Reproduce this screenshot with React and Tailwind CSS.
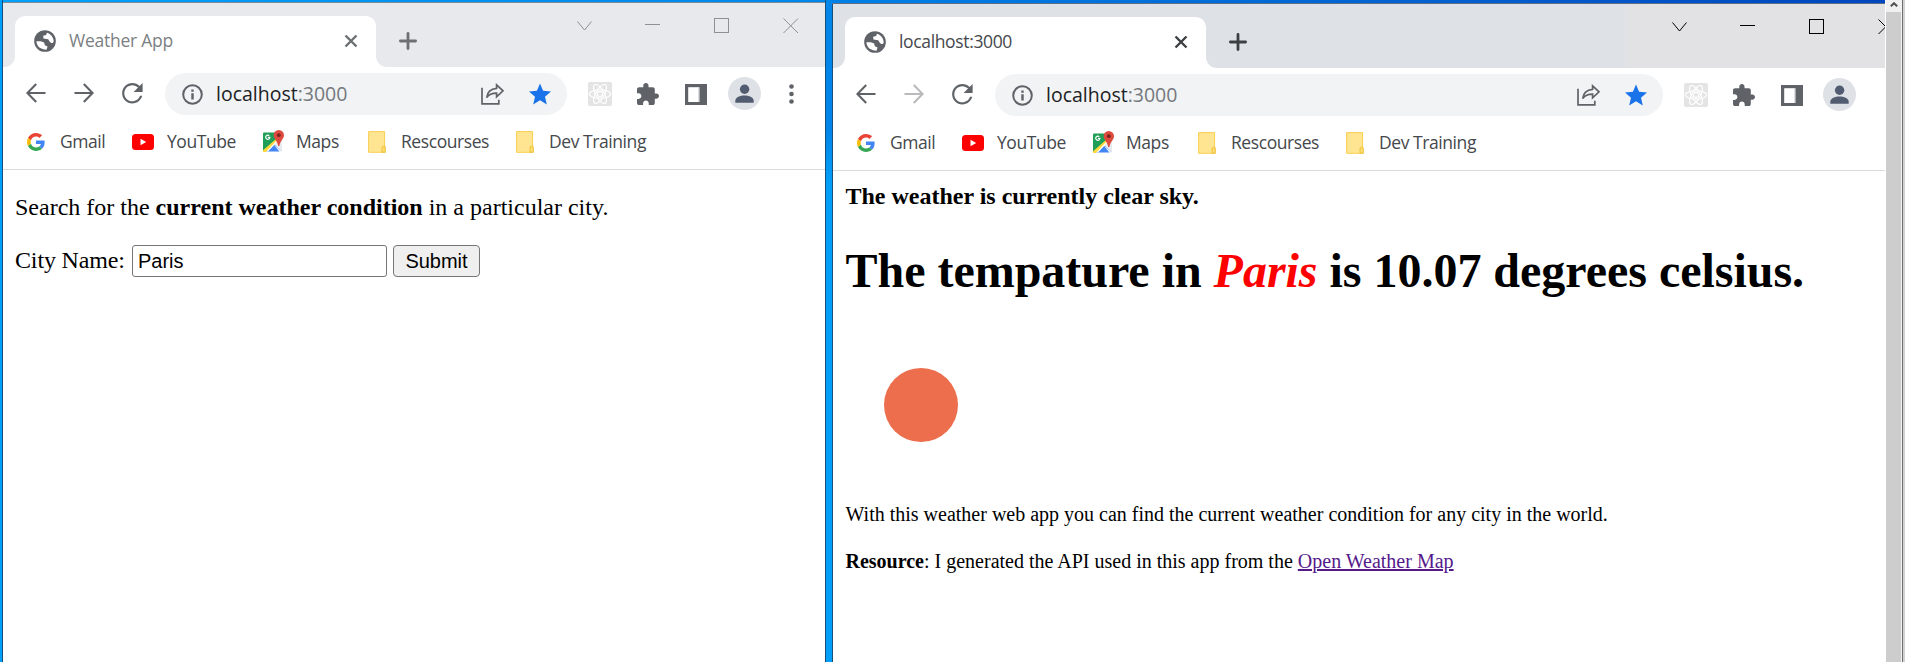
const SERIF = "font-['Liberation_Serif',serif]";
const UI = "font-['Open_Sans',sans-serif]";

function Globe() {
  return (
    <svg className="size-[22px] shrink-0" viewBox="0 0 65 65">
      <circle cx="32.5" cy="32.5" r="32" fill="#5f6368" />
      <path fill="#fff" d="M38 8C50 12 58 22 58 33c0 4-3 7-8 5l-4-4-4-7-14-2-1-8 9-2z" />
      <path fill="#fff" d="M7 33h13l10 4 2 8 8 4-3 9C20 58 8 48 7 33z" />
    </svg>
  );
}

function Cross({ className }) {
  return (
    <svg className={className} viewBox="0 0 14 14" fill="none" stroke="currentColor" strokeWidth="2.4">
      <path d="M1.5 1.5l11 11M12.5 1.5l-11 11" />
    </svg>
  );
}

function Arrow({ className }) {
  return (
    <svg className={className} viewBox="0 0 20 20" fill="none" stroke="currentColor" strokeWidth="2.1">
      <path d="M19.5 10H1.8M10.2 1L1.4 10l8.8 9" />
    </svg>
  );
}

function Reload() {
  return (
    <svg className="h-[20.5px] w-[21px] shrink-0 overflow-visible text-[#5f6368]" viewBox="4 4 16.2 16" fill="currentColor">
      <path d="M17.65 6.35C16.2 4.9 14.21 4 12 4c-4.42 0-7.99 3.58-7.99 8s3.57 8 7.99 8c3.73 0 6.84-2.55 7.73-6h-1.78c-.82 2.5-3.2 4.3-5.95 4.3-3.5 0-6.3-2.8-6.3-6.3s2.8-6.3 6.3-6.3c1.75 0 3.3.75 4.42 1.88L13 11h7V4z" />
    </svg>
  );
}

function Info() {
  return (
    <svg className="size-[21px] shrink-0" viewBox="0 0 21 21" fill="none" stroke="#5f6368" strokeWidth="2">
      <circle cx="10.5" cy="10.5" r="9.3" />
      <path strokeWidth="2.4" d="M10.5 9.3v6.2M10.5 5.4v2.3" />
    </svg>
  );
}

function Share() {
  return (
    <svg className="h-[22px] w-6 shrink-0" viewBox="0 0 24 22" fill="none" stroke="#5f6368" strokeWidth="1.7">
      <path d="M1 4.8v16h16.8v-4" />
      <path d="M15.6 1.8L22 7.8l-6.400 6v-3.600c-4.600 0-7.700 1.100-9.900 4.300.5-4.800 3.600-8.600 9.900-9.200z" />
    </svg>
  );
}

function Star() {
  return (
    <svg className="size-[22px] shrink-0" viewBox="2 2 20 19" fill="#1a73e8">
      <path d="M12 17.270L18.180 21l-1.640-7.030L22 9.240l-7.190-.610L12 2 9.190 8.630 2 9.240l5.460 4.730L5.820 21z" />
    </svg>
  );
}

function ReactBadge() {
  return (
    <svg className="size-6 shrink-0" viewBox="0 0 24 24" fill="none" stroke="#fff" strokeWidth="1.1">
      <rect width="24" height="24" rx="2" fill="#e4e4e4" stroke="none" />
      <circle cx="12" cy="12" r="2.600" />
      <ellipse cx="12" cy="12" rx="10.600" ry="4.300" />
      <ellipse cx="12" cy="12" rx="10.600" ry="4.300" transform="rotate(60 12 12)" />
      <ellipse cx="12" cy="12" rx="10.600" ry="4.300" transform="rotate(120 12 12)" />
    </svg>
  );
}

function Puzzle() {
  return (
    <svg className="size-[22px] shrink-0" viewBox="2 1 21 21" fill="#5f6368">
      <path d="M20.5 11H19V7c0-1.1-.9-2-2-2h-4V3.5C13 2.12 11.88 1 10.5 1S8 2.12 8 3.5V5H4c-1.1 0-1.99.9-1.99 2v3.8H3.5c1.49 0 2.7 1.21 2.7 2.7s-1.210 2.7-2.7 2.7H2V20c0 1.1.9 2 2 2h3.8v-1.5c0-1.49 1.21-2.7 2.7-2.7s2.7 1.210 2.7 2.7V22H17c1.1 0 2-.9 2-2v-4h1.5c1.380 0 2.5-1.120 2.5-2.5S21.880 11 20.5 11z" />
    </svg>
  );
}

function SidePanel() {
  return (
    <svg className="h-[21px] w-[22px] shrink-0" viewBox="0 0 22 21">
      <path fill="#5f6368" d="M0 0h22v21H0z" />
      <path fill="#fff" d="M3.200 3.200h11v14.800h-11z" />
      <path fill="#d4d5d7" d="M13.200 3.200h1.300v14.800h-1.300z" />
    </svg>
  );
}

function Avatar() {
  return (
    <svg className="size-[33px] shrink-0" viewBox="0 0 33 33">
      <circle cx="16.5" cy="16.5" r="16.500" fill="#dee1e6" />
      <circle cx="16.600" cy="12.200" r="4.700" fill="#525c70" />
      <path fill="#525c70" d="M7.300 25.800v-2c0-3.500 5-5.300 9.200-5.300s9.200 1.800 9.200 5.300v2z" />
    </svg>
  );
}

function Dots() {
  return (
    <svg className="h-5 w-[5px] shrink-0" viewBox="0 0 5 20" fill="#5f6368">
      <circle cx="2.500" cy="2.500" r="2.300" />
      <circle cx="2.500" cy="10" r="2.300" />
      <circle cx="2.500" cy="17.500" r="2.300" />
    </svg>
  );
}

function Google() {
  return (
    <svg className="size-[18px]" viewBox="0 0 48 48">
      <path fill="#EA4335" d="M24 9.500c3.540 0 6.710 1.220 9.210 3.600l6.850-6.850C35.900 2.380 30.470 0 24 0 14.620 0 6.510 5.380 2.560 13.220l7.980 6.190C12.430 13.720 17.740 9.500 24 9.500z" />
      <path fill="#4285F4" d="M46.980 24.550c0-1.570-.150-3.090-.380-4.550H24v9.020h12.940c-.580 2.960-2.260 5.480-4.780 7.180l7.730 6c4.510-4.180 7.090-10.360 7.090-17.650z" />
      <path fill="#FBBC05" d="M10.530 28.590c-.480-1.450-.760-2.990-.760-4.590s.270-3.140.760-4.590l-7.980-6.190C.920 16.460 0 20.120 0 24c0 3.880.920 7.540 2.560 10.780z" />
      <path fill="#34A853" d="M24 48c6.480 0 11.930-2.130 15.890-5.810l-7.730-6c-2.150 1.450-4.920 2.300-8.160 2.300-6.260 0-11.570-4.220-13.470-9.910l-7.980 6.190C6.510 42.620 14.620 48 24 48z" />
    </svg>
  );
}

function YouTube() {
  return (
    <svg className="h-4 w-[22px]" viewBox="0 0 22 16">
      <rect width="22" height="16" rx="3.500" fill="#f00" />
      <path fill="#fff" d="M8.500 4.800v6.400l5.700-3.200z" />
    </svg>
  );
}

function Maps() {
  return (
    <svg className="h-[23px] w-[23px]" viewBox="0 0 23 23">
      <path fill="#1e9e57" d="M2 2.500h13l4 4.500-9 7-9 8V4c0-.8.300-1.500 1-1.500z" />
      <path fill="#e8ebee" d="M17 10l3 1v11L11 14z" />
      <path fill="#4285f4" d="M11.500 13.500l7.800 8H2.700z" />
      <path fill="#ffd93b" d="M14.500 8.500l1.800 2.500L4 22H1v-1.800z" />
      <path fill="#fff" d="M14.500 10.500l1 1L6 21.500H4.300zM11.300 14l8.500 8h-2z" />
      <path fill="none" stroke="#fff" strokeWidth="1.200" d="M7.300 5.700a2.100 2.100 0 1 0 .6 1.600H5.900" />
      <path fill="#dd4b3e" d="M16.800 0a5.200 5.200 0 0 1 5.200 5.200c0 3.600-3.900 5.300-4.600 10.800h-1.200c-.7-5.500-4.600-7.200-4.600-10.800A5.200 5.200 0 0 1 16.800 0z" />
      <circle cx="16.800" cy="5.200" r="1.900" fill="#7d231d" />
    </svg>
  );
}

function Folder() {
  return (
    <svg className="h-[22px] w-[18px]" viewBox="0 0 18 22">
      <path fill="#ffe591" stroke="#f8cf50" d="M.6.6h16v20.700H.6z" />
      <path fill="#fcd961" stroke="#eebf3c" strokeWidth=".9" d="M14 21.300v-5.300c0-1 3.400-1 3.400 0v5.300z" />
      <path fill="#ffe591" d="M15.300 17.200h.9v2.800h-.9z" />
    </svg>
  );
}

const bookmarks = [
  { label: "Gmail", Icon: Google, item: "w-[105px]", icon: "w-[33px]" },
  { label: "YouTube", Icon: YouTube, item: "w-[130px]", icon: "w-[35px]" },
  { label: "Maps", Icon: Maps, item: "w-[106px]", icon: "w-[34px]" },
  { label: "Rescourses", Icon: Folder, item: "w-[148px]", icon: "w-[33px]" },
  { label: "Dev Training", Icon: Folder, item: "w-[140px]", icon: "w-[33px]" },
];

function Controls({ className }) {
  return (
    <svg className={"mt-[15px] h-4 w-[232px] shrink-0 " + className} viewBox="0 0 232 16" fill="none" stroke="currentColor" strokeWidth="1" shapeRendering="crispEdges">
      <path d="M1.500 3.500l7 8.500 7-8.500" shapeRendering="auto" />
      <path d="M69 6.500h15" />
      <path d="M138.500.5h14v14h-14z" />
      <path d="M207.500.5l14.500 14.500M222 .5l-14.500 14.500" shapeRendering="auto" />
    </svg>
  );
}

function Chrome({ title, active, menu }) {
  return (
    <header className={UI}>
      <div className={active ? "flex h-16 bg-linear-to-r from-[#dee1e6] from-75% to-[#e2e2e4] to-76%" : "flex h-16 bg-[#e8e9ed]"}>
        <div className="flex items-end">
          <div className="h-[51px] w-3 bg-white">
            <div className={active ? "h-full rounded-br-[11px] bg-[#dee1e6]" : "h-full rounded-br-[11px] bg-[#e8e9ed]"} />
          </div>
          <div className="flex h-[51px] w-[361px] items-center rounded-t-[10px] bg-white pb-px pl-[19px] pr-[18px]">
            <Globe />
            <span className={active ? "mb-0.5 ml-[13px] grow text-[17.5px] tracking-[-0.35px] text-[#45484c]" : "mb-0.5 ml-[13px] grow text-[17.5px] tracking-[-0.24px] text-[#7b7f83]"}>{title}</span>
            <Cross className={active ? "size-[14px] text-[#3c4043]" : "size-[14px] text-[#6c7073]"} />
          </div>
          <div className="h-[51px] w-3 bg-white">
            <div className={active ? "h-full rounded-bl-[11px] bg-[#dee1e6]" : "h-full rounded-bl-[11px] bg-[#e8e9ed]"} />
          </div>
        </div>
        <svg className={active ? "ml-[11px] mt-[29px] size-[18px] text-[#3c4043]" : "ml-[11px] mt-[29px] size-[18px] text-[#6c7073]"} viewBox="0 0 18 18" stroke="currentColor" strokeWidth="2.800" strokeLinecap="round">
          <path d="M1.400 9h15.200M9 1.400v15.200" />
        </svg>
        <div className="flex grow justify-end">
          <Controls className={active ? "-mr-[18px] text-black" : "mr-[17px] text-[#8f9093]"} />
        </div>
      </div>

      <div className={menu ? "flex h-[54px] items-center pl-[23px] pr-[31px]" : "flex h-[54px] items-center pl-[23px] pr-[29px]"}>
        <div className="mb-0.5 flex items-center gap-7">
          <Arrow className="size-5 shrink-0 text-[#5f6368]" />
          <Arrow className={active ? "size-5 shrink-0 rotate-180 text-[#bababc]" : "size-5 shrink-0 rotate-180 text-[#5f6368]"} />
          <Reload />
        </div>
        <div className="ml-[22px] flex h-[42px] grow items-center rounded-full bg-[#f1f3f4] pl-[17px] pr-4">
          <Info />
          <span className="ml-[13px] grow text-[19.5px] text-[#202124]">
            localhost<span className="text-[#75797e]">:3000</span>
          </span>
          <Share />
          <div className="ml-6 flex"><Star /></div>
        </div>
        <div className="ml-[21px] flex items-center">
          <ReactBadge />
          <div className="ml-[25px]"><Puzzle /></div>
          <div className="ml-[26px]"><SidePanel /></div>
          <div className={menu ? "mb-px ml-[21px]" : "mb-px ml-5"}><Avatar /></div>
          {menu && <div className="mb-px ml-7"><Dots /></div>}
        </div>
      </div>

      <nav className="flex h-[49px] items-center border-b border-[#dadbdd] pb-[7px] pl-6">
        {bookmarks.map(({ label, Icon, item, icon }) => (
          <div key={label} className={"flex shrink-0 items-center " + item}>
            <span className={"shrink-0 " + icon}><Icon /></span>
            <span className="mb-0.5 whitespace-nowrap text-[17.5px] leading-6 tracking-[-0.43px] text-[#45484c]">{label}</span>
          </div>
        ))}
      </nav>
    </header>
  );
}

export default function App() {
  return (
    <div className="flex h-[662px] w-[1905px] overflow-hidden bg-white">
      <div className="flex w-[1885px] shrink-0 overflow-hidden bg-linear-to-r from-[#009ffa] via-[#0080e6] via-45% to-[#0046be]">
        <div className="flex w-[832px] shrink-0 bg-linear-to-b from-[#0086ea] from-20% to-[#00a0fa] to-28%">
          <div className="h-full w-[2px] bg-[#009ffa]" />
          <section className="h-full w-[824px] border-x border-x-[#174f78] bg-white">
            <div className="h-[3px] border-b border-[#7d8c99] bg-linear-to-r from-[#009ffa] to-[#0086ea]" />
            <Chrome title="Weather App" menu />
            <main className={"pl-3 pt-[23px] text-2xl leading-7 text-black " + SERIF}>
              <p>
                Search for the <b>current weather condition</b> in a particular city.
              </p>
              <div className="mt-6 flex h-8 items-center">
                <label htmlFor="city" className="mb-0.5 w-[117px] shrink-0 tracking-[-0.15px]">City Name:</label>
                <input id="city" defaultValue="Paris" className="h-8 w-[255px] rounded-[3px] border border-[#767676] bg-white px-[5px] font-['Liberation_Sans',sans-serif] text-[20px]" />
                <button className="ml-[6px] h-8 w-[87px] rounded-[4px] border border-[#767676] bg-[#efefef] font-['Liberation_Sans',sans-serif] text-[20px] leading-none">Submit</button>
              </div>
            </main>
          </section>
        </div>

        <section className="flex grow flex-col">
          <div className="h-[4px] shrink-0 border-b border-[#5c6f86]" />
          <div className="grow border-l border-[#174f78] bg-white">
            <Chrome title="localhost:3000" active />
            <main className={"pl-[12.5px] pt-[11px] text-black " + SERIF}>
              <p className="text-2xl font-bold leading-7">The weather is currently clear sky.</p>
              <h1 className="mt-[33px] text-5xl font-bold leading-[56px] tracking-[-0.02px]">
                The tempature in <em className="text-[#f00]">Paris</em> is 10.07 degrees celsius.
              </h1>
              <div className="ml-[38px] mt-[69px] size-[74px] rounded-full bg-[#ec6e4c]" />
              <p className="mt-[60px] text-xl leading-6">
                With this weather web app you can find the current weather condition for any city in the world.
              </p>
              <p className="mt-[23px] text-xl leading-6">
                <b>Resource</b>: I generated the API used in this app from the{" "}
                <a href="#map" className="text-[#551a8b] underline">Open Weather Map</a>
              </p>
            </main>
          </div>
        </section>
      </div>

      <aside className="flex grow bg-[#d2d2d2]">
        <div className="w-px bg-white" />
        <div className="w-[15px] shrink-0 bg-[#cdcdcd]">
          <div className="flex h-3 justify-center bg-[#f0f0f0]">
            <svg className="mt-0.5 h-[5px] w-2" viewBox="0 0 8 5" fill="none" stroke="#505050" strokeWidth="2">
              <path d="M.8 4.300L4 1.200l3.200 3.100" />
            </svg>
          </div>
        </div>
        <div className="w-px bg-[#f4f4f4]" />
        <div className="w-px bg-[#6f6f6f]" />
      </aside>
    </div>
  );
}
